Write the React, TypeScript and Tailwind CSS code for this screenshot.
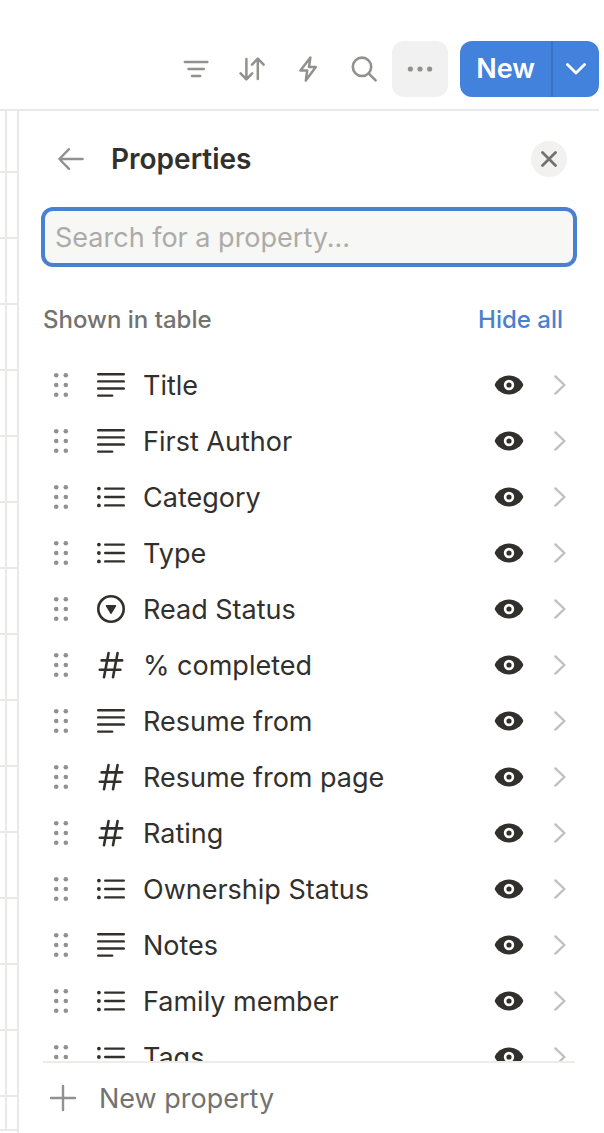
import React from 'react';

type PropertyType = 'text' | 'multi' | 'select' | 'number';

interface Property {
  name: string;
  type: PropertyType;
}

const properties: Property[] = [
  { name: 'Title', type: 'text' },
  { name: 'First Author', type: 'text' },
  { name: 'Category', type: 'multi' },
  { name: 'Type', type: 'multi' },
  { name: 'Read Status', type: 'select' },
  { name: '% completed', type: 'number' },
  { name: 'Resume from', type: 'text' },
  { name: 'Resume from page', type: 'number' },
  { name: 'Rating', type: 'number' },
  { name: 'Ownership Status', type: 'multi' },
  { name: 'Notes', type: 'text' },
  { name: 'Family member', type: 'multi' },
  { name: 'Tags', type: 'multi' },
];

const FilterIcon = () => (
  <svg width="28" height="28" viewBox="0 0 28 28" fill="none" stroke="currentColor" strokeWidth="2.4" strokeLinecap="round">
    <path d="M2.8 7h22.6M6.4 14h15.4M10 21h8.2" />
  </svg>
);

const SortIcon = () => (
  <svg width="28" height="28" viewBox="0 0 28 28" fill="none" stroke="currentColor" strokeWidth="2.5" strokeLinecap="round" strokeLinejoin="round">
    <path d="M8.4 4v19.8M2.6 18.4l5.8 6 5.8-6M19.8 24V4.2M14 9.6l5.8-6 5.8 6" />
  </svg>
);

const BoltIcon = () => (
  <svg width="28" height="28" viewBox="0 0 28 28" fill="none" stroke="currentColor" strokeWidth="2.5" strokeLinecap="round" strokeLinejoin="round">
    <path d="M16.4 2.4 6.4 15.6h6.8L11.8 25.6 21.800 12H15z" />
  </svg>
);

const SearchIcon = () => (
  <svg width="28" height="28" viewBox="0 0 28 28" fill="none" stroke="currentColor" strokeWidth="2.6" strokeLinecap="round">
    <circle cx="12" cy="11.8" r="9.2" />
    <path d="m18.8 18.6 6.8 6.8" />
  </svg>
);

const MoreIcon = () => (
  <svg width="28" height="28" viewBox="0 0 28 28" fill="currentColor">
    <circle cx="4.4" cy="14" r="2.6" />
    <circle cx="14" cy="14" r="2.6" />
    <circle cx="23.6" cy="14" r="2.6" />
  </svg>
);

const HandleIcon = () => (
  <svg width="16" height="28" viewBox="0 0 16 28" fill="currentColor">
    <circle cx="3.2" cy="4.3" r="2.3" />
    <circle cx="12.8" cy="4.3" r="2.3" />
    <circle cx="3.2" cy="14" r="2.3" />
    <circle cx="12.8" cy="14" r="2.3" />
    <circle cx="3.2" cy="23.7" r="2.3" />
    <circle cx="12.8" cy="23.7" r="2.3" />
  </svg>
);

const EyeIcon = () => (
  <svg width="30" height="20" viewBox="0 0 30 20">
    <path d="M.6 10C2.6 5 8 .6 15 .6S27.4 5 29.4 10c-2 5-7.4 9.4-14.4 9.4S2.6 15 .6 10z" fill="currentColor" />
    <circle cx="15" cy="10" r="3.9" fill="currentColor" stroke="white" strokeWidth="2.6" />
  </svg>
);

const TypeIcon = ({ type }: { type: PropertyType }) => (
  <svg width="28" height="28" viewBox="0 0 28 28" fill="none" stroke="currentColor" strokeWidth="2.4" strokeLinecap="round" strokeLinejoin="round">
    {type === 'text' && <path d="M1.2 3.3h25.6M1.2 10.4h25.6M1.2 17.5h25.6M1.2 24.6h14" />}
    {type === 'multi' && (
      <>
        <path d="M8.2 5.6h18.6M8.2 14h18.6M8.2 22.4h18.6" />
        <g fill="currentColor" stroke="none">
          <circle cx="1.9" cy="5.6" r="1.9" />
          <circle cx="1.9" cy="14" r="1.9" />
          <circle cx="1.9" cy="22.4" r="1.9" />
        </g>
      </>
    )}
    {type === 'select' && (
      <>
        <circle cx="14" cy="14" r="12.7" strokeWidth="2.6" />
        <path d="M9.6 10.8h8.8L14 18.2z" fill="currentColor" strokeWidth="1.6" />
      </>
    )}
    {type === 'number' && <path d="M11.6 2 7 26.2M20.6 2 16 26.2M4.6 9.4h20.6M2.8 18.8h20.6" strokeWidth="2.6" />}
  </svg>
);

const toolbarItems = [
  { label: 'Filter', icon: <FilterIcon /> },
  { label: 'Sort', icon: <SortIcon /> },
  { label: 'Automations', icon: <BoltIcon /> },
  { label: 'Search', icon: <SearchIcon /> },
];

const Toolbar: React.FC = () => (
  <header className="mr-[5px] flex shrink-0 items-center justify-end border-b-2 border-[#e9e9e8] pt-[41px] pb-3 text-[#91918e]">
    {toolbarItems.map((item) => (
      <button key={item.label} type="button" aria-label={item.label} className="flex size-14 items-center justify-center">
        {item.icon}
      </button>
    ))}
    <button type="button" aria-label="More options" className="flex size-14 items-center justify-center rounded-xl bg-[#f1f1f1]">
      <MoreIcon />
    </button>
    <div className="ml-3 flex h-14 overflow-hidden rounded-xl bg-[#4281dc] text-white">
      <button type="button" className="w-[91px] text-[27px] leading-9 font-semibold">
        New
      </button>
      <button type="button" aria-label="New from template" className="flex w-12 items-center justify-center border-l-2 border-[#3a72c4]">
        <svg width="20" height="12" viewBox="0 0 20 12" fill="none" stroke="currentColor" strokeWidth="2.8" strokeLinecap="round" strokeLinejoin="round">
          <path d="m1.5 1.5 8.5 8.5 8.5-8.5" />
        </svg>
      </button>
    </div>
  </header>
);

// Edge of the table that stays visible beside the panel
const TableEdge: React.FC = () => (
  <div className="w-[19px] shrink-0 overflow-hidden border-r-2 border-[#e9e9e8]">
    <div className="h-[62px] border-b-2 border-[#e9e9e8] pl-[5px]">
      <div className="h-full border-l-2 border-[#e9e9e8]" />
    </div>
    {Array.from({ length: 14 }, (_, i) => (
      <div key={i} className="h-[66px] border-b-2 border-[#e9e9e8] pl-[5px]">
        <div className="h-full border-l-2 border-[#e9e9e8]" />
      </div>
    ))}
    <div className="h-[34px] border-b-2 border-[#e9e9e8] pl-[5px]">
      <div className="h-full border-l-2 border-[#e9e9e8]" />
    </div>
  </div>
);

const PropertyRow = ({ property }: { property: Property }) => (
  <li className="flex h-14 items-center pr-[9px] pl-[10px]">
    <span className="mr-7 text-[#91918e]">
      <HandleIcon />
    </span>
    <span className="mr-[18px]">
      <TypeIcon type={property.type} />
    </span>
    <span className="flex-1 truncate pt-0.5 text-[27px] leading-9">{property.name}</span>
    <button type="button" aria-label={`Hide ${property.name}`} className="mr-[30px]">
      <EyeIcon />
    </button>
    <button type="button" aria-label={`Edit ${property.name}`} className="text-[#c0c0be]">
      <svg width="12" height="20" viewBox="0 0 12 20" fill="none" stroke="currentColor" strokeWidth="2.4" strokeLinecap="round" strokeLinejoin="round">
        <path d="m1.4 1.4 9 8.6-9 8.6" />
      </svg>
    </button>
  </li>
);

const App: React.FC = () => {
  return (
    <div className="flex h-screen flex-col bg-white font-['Inter',sans-serif] text-[#32302c]">
      <Toolbar />
      <div className="flex min-h-0 flex-1">
        <TableEdge />

        <section className="flex min-w-0 flex-1 flex-col pr-[29px] pl-6">
          {/* Panel header */}
          <div className="flex h-24 shrink-0 items-center pr-2 pl-[14px]">
            <button type="button" aria-label="Back" className="mr-[26px] text-[#91918e]">
              <svg width="28" height="24" viewBox="0 0 28 24" fill="none" stroke="currentColor" strokeWidth="2.4" strokeLinecap="round" strokeLinejoin="round">
                <path d="M12 2.2 2.4 12l9.600 9.800M2.600 12h23" />
              </svg>
            </button>
            <h1 className="flex-1 text-[28px] leading-9 font-semibold">Properties</h1>
            <button type="button" aria-label="Close" className="flex size-9 items-center justify-center rounded-full bg-[#f1f1f0] text-[#73726e]">
              <svg width="16" height="16" viewBox="0 0 16 16" fill="none" stroke="currentColor" strokeWidth="2.8" strokeLinecap="round">
                <path d="m1.5 1.5 13 13M14.5 1.5l-13 13" />
              </svg>
            </button>
          </div>

          <input
            type="text"
            aria-label="Search for a property"
            placeholder="Search for a property..."
            className="mt-0.5 h-14 w-full shrink-0 rounded-[10px] border-2 border-[#4a80d0] bg-[#f7f7f5] px-[10px] text-[27px] leading-9 ring-2 ring-[#4a80d0] outline-none placeholder:text-[#acaba9]"
          />

          <div className="mt-[18px] flex h-[74px] shrink-0 items-center justify-between pr-3">
            <h2 className="text-2xl font-medium text-[#73726e]">Shown in table</h2>
            <button type="button" className="text-2xl font-medium text-[#4a80d0]">
              Hide all
            </button>
          </div>

          <ul className="min-h-0 flex-1 overflow-y-auto [scrollbar-width:none]">
            {properties.map((property) => (
              <PropertyRow key={property.name} property={property} />
            ))}
          </ul>

          <button type="button" className="flex h-[72px] shrink-0 items-center border-t-2 border-[#ececeb] pl-[6px] text-[27px] leading-9 text-[#73726e]">
            <svg className="mr-[22px] text-[#91918e]" width="28" height="28" viewBox="0 0 28 28" fill="none" stroke="currentColor" strokeWidth="2.4" strokeLinecap="round">
              <path d="M14 2v24M2 14h24" />
            </svg>
            <span className="pt-0.5">New property</span>
          </button>
        </section>
      </div>
    </div>
  );
};

export default App;
